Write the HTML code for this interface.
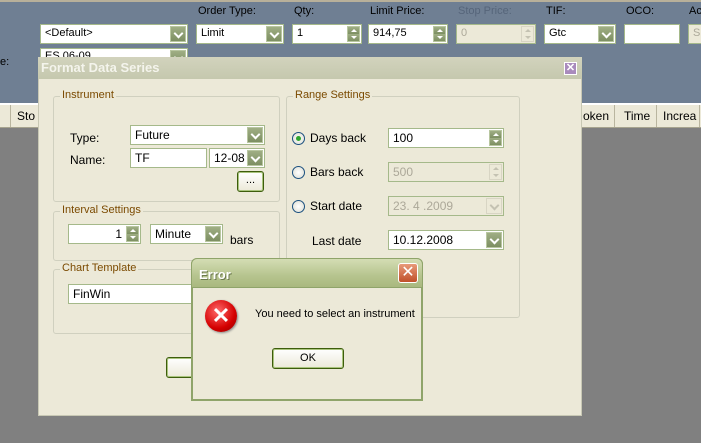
<!DOCTYPE html>
<html><head><style>
*{box-sizing:border-box;margin:0;padding:0}
body{width:701px;height:443px;overflow:hidden;background:#808080;font:11px "Liberation Sans",sans-serif;color:#000;position:relative}
.a{position:absolute}
.top{left:0;top:0;width:701px;height:103px;background:#6f7f93;border-top:2px solid #b8b09a}
.lbl{position:absolute;color:#000;font-size:11px}
.inp{position:absolute;background:#fff;border:1px solid #a5b98a;height:20px;padding:2px 4px;font-size:11px;white-space:nowrap;overflow:hidden}
.dis{background:#ece9d8;color:#aca899}
.dd{position:absolute;right:1px;top:1px;width:16px;height:16px;background:linear-gradient(#9fae84,#7d8f62);border:1px solid #b8c6a0}
.dd:after{content:"";position:absolute;left:4px;top:3px;width:5px;height:5px;border-right:2px solid #fff;border-bottom:2px solid #fff;transform:rotate(45deg)}
.dd.g{background:#ece9d8;border-color:#d8d5c4}.dd.g:after{border-color:#c4c2b2}
.sp{position:absolute;right:1px;top:1px;width:13px;height:16px;background:linear-gradient(#9fae84,#7d8f62 50%,#9fae84 50%,#7d8f62);border:1px solid #b8c6a0}
.sp:before,.sp:after{content:"";position:absolute;left:3px;border-left:3px solid transparent;border-right:3px solid transparent}
.sp:before{top:2px;border-bottom:3px solid #fff}
.sp:after{bottom:2px;border-top:3px solid #fff}
.sp.g{background:#ece9d8;border-color:#d8d5c4}.sp.g:before{border-bottom-color:#c4c2b2}.sp.g:after{border-top-color:#c4c2b2}
.hdr{left:0;top:103px;width:701px;height:25px;background:#ece9d8;border-top:2px solid #fff;border-bottom:1px solid #a7a48f}
.hc{position:absolute;top:0;height:22px;border-left:1px solid #b9b59f;padding:4px 6px;font-size:12px}
.dlg{left:38px;top:57px;width:544px;height:359px;background:#ece9d8;border:1px solid #c8c8b4;border-top:0}
.tb{left:38px;top:57px;width:544px;height:22px;background:linear-gradient(#d2d3bd,#c5c8ae);color:#f4f4ec;font-weight:bold;font-size:13px;padding:3px 3px}
.grp{position:absolute;border:1px solid #d0d0bf;border-radius:3px}
.gt{position:absolute;top:-8px;left:6px;background:#ece9d8;color:#7b4a00;padding:0 2px;font-size:11px}
.rad{position:absolute;width:13px;height:13px;border:1px solid #1c5180;border-radius:50%;background:radial-gradient(#fff,#dcdcd0)}
.btn{position:absolute;border:1px solid #3d5d0c;border-radius:3px;background:linear-gradient(#fff,#ece9d8);text-align:center;font-size:11px;box-shadow:inset 0 0 0 1px #a9c47c}
</style></head><body>
<div class="a top"></div>
<div class="lbl" style="left:198px;top:5px">Order Type:</div>
<div class="lbl" style="left:294px;top:5px">Qty:</div>
<div class="lbl" style="left:370px;top:5px">Limit Price:</div>
<div class="lbl" style="left:458px;top:5px;color:#56657a">Stop Price:</div>
<div class="lbl" style="left:546px;top:5px">TIF:</div>
<div class="lbl" style="left:626px;top:5px">OCO:</div>
<div class="lbl" style="left:689px;top:5px">Ac</div>
<div class="lbl" style="left:0;top:56px">e:</div>
<div class="inp" style="left:40px;top:24px;width:148px">&lt;Default&gt;<span class="dd"></span></div>
<div class="inp" style="left:40px;top:48px;width:148px;height:12px"><span style="position:relative;top:-1px">ES 06-09</span><span class="dd"></span></div>
<div class="inp" style="left:196px;top:24px;width:88px">Limit<span class="dd"></span></div>
<div class="inp" style="left:292px;top:24px;width:70px">1<span class="sp"></span></div>
<div class="inp" style="left:368px;top:24px;width:80px">914,75<span class="sp"></span></div>
<div class="inp dis" style="left:456px;top:24px;width:80px">0<span class="sp g"></span></div>
<div class="inp" style="left:544px;top:24px;width:72px">Gtc<span class="dd"></span></div>
<div class="inp" style="left:624px;top:24px;width:56px"></div>
<div class="inp dis" style="left:688px;top:24px;width:20px">Si</div>
<div class="a hdr">
<div class="hc" style="left:10px;width:40px">Sto</div>
<div class="hc" style="left:578px;width:36px;padding-left:4px">oken</div>
<div class="hc" style="left:614px;width:42px;padding-left:9px">Time</div>
<div class="hc" style="left:656px;width:44px">Increa</div>
<div class="hc" style="left:699px;width:4px"></div>
</div>
<div class="a dlg"></div>
<div class="a tb">Format Data Series</div>
<div class="a" style="left:564px;top:62px;width:13px;height:13px;background:#a98bbd;border:1px solid #fff;color:#fff;font-size:11px;line-height:11px;text-align:center;font-weight:bold">✕</div>

<div class="grp" style="left:53px;top:96px;width:227px;height:106px"><span class="gt">Instrument</span></div>
<div class="lbl" style="left:70px;top:131px;font-size:12px">Type:</div>
<div class="lbl" style="left:70px;top:153px;font-size:12px">Name:</div>
<div class="inp" style="left:130px;top:125px;width:135px;font-size:12px">Future<span class="dd"></span></div>
<div class="inp" style="left:130px;top:148px;width:77px;font-size:12px">TF</div>
<div class="inp" style="left:209px;top:148px;width:56px;font-size:12px">12-08<span class="dd"></span></div>
<div class="btn" style="left:237px;top:171px;width:27px;height:21px;line-height:16px">...</div>

<div class="grp" style="left:53px;top:211px;width:227px;height:50px"><span class="gt">Interval Settings</span></div>
<div class="inp" style="left:68px;top:224px;width:73px;text-align:right;padding-right:18px;font-size:12px">1<span class="sp"></span></div>
<div class="inp" style="left:150px;top:224px;width:73px;font-size:12px">Minute<span class="dd"></span></div>
<div class="lbl" style="left:230px;top:233px;font-size:12px">bars</div>

<div class="grp" style="left:53px;top:269px;width:227px;height:65px"><span class="gt">Chart Template</span></div>
<div class="inp" style="left:68px;top:284px;width:200px;font-size:12px">FinWin</div>

<div class="grp" style="left:286px;top:96px;width:234px;height:222px"><span class="gt">Range Settings</span></div>
<div class="rad" style="left:292px;top:132px"><span style="position:absolute;left:3px;top:3px;width:5px;height:5px;border-radius:50%;background:#2fa62f"></span></div>
<div class="rad" style="left:292px;top:166px"></div>
<div class="rad" style="left:292px;top:200px"></div>
<div class="lbl" style="left:310px;top:131px;font-size:12px">Days back</div>
<div class="lbl" style="left:310px;top:165px;font-size:12px">Bars back</div>
<div class="lbl" style="left:310px;top:199px;font-size:12px">Start date</div>
<div class="lbl" style="left:312px;top:234px;font-size:12px">Last date</div>
<div class="inp" style="left:388px;top:128px;width:116px;font-size:12px">100<span class="sp"></span></div>
<div class="inp dis" style="left:388px;top:162px;width:116px;font-size:12px">500<span class="sp g"></span></div>
<div class="inp dis" style="left:388px;top:196px;width:116px;font-size:12px">23. 4 .2009<span class="dd g"></span></div>
<div class="inp" style="left:388px;top:230px;width:116px;font-size:12px">10.12.2008<span class="dd"></span></div>

<div class="btn" style="left:166px;top:357px;width:76px;height:21px"></div>

<div class="a" style="left:191px;top:258px;width:232px;height:143px;background:#ece9d8;border:2px solid #8fa46a;border-top:0;border-radius:6px 6px 0 0"></div>
<div class="a" style="left:191px;top:258px;width:232px;height:30px;border-radius:6px 6px 0 0;background:linear-gradient(#d4ddb4,#b6c48e 60%,#a9b87f);color:#fff;font-weight:bold;font-size:13px;padding:8px 7px;text-shadow:1px 1px 0 #6d7a4e;border:1px solid #8fa46a">Error</div>
<div class="a" style="left:398px;top:263px;width:20px;height:20px;background:linear-gradient(#e89a7a,#c0502a);border:1px solid #fff;border-radius:3px;color:#fff;font-size:16px;line-height:18px;text-align:center">✕</div>
<div class="a" style="left:205px;top:300px;width:32px;height:32px;border-radius:50%;background:radial-gradient(circle at 40% 35%,#ff6a6a,#d40000 60%,#8a0000);box-shadow:1px 1px 2px #888;color:#fff;font-size:22px;line-height:32px;text-align:center;font-weight:bold">✕</div>
<div class="lbl" style="left:255px;top:308px;font-size:11px">You need to select an instrument</div>
<div class="btn" style="left:272px;top:348px;width:72px;height:21px;line-height:19px">OK</div>
</body></html>
